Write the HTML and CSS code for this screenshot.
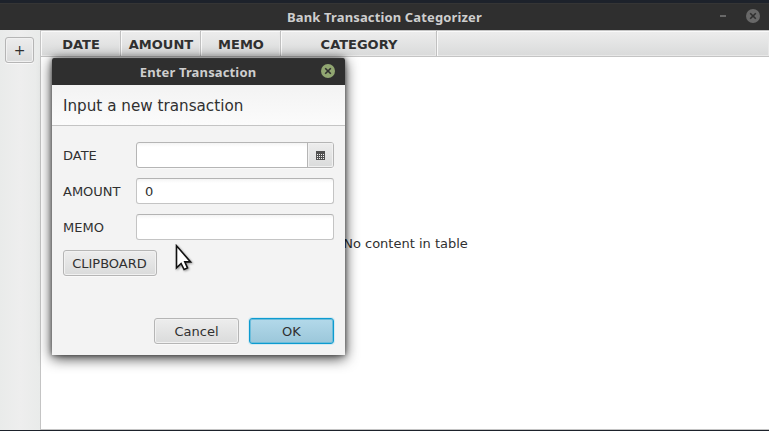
FILE: index.html
```html
<!DOCTYPE html>
<html lang="en">
<head>
<meta charset="utf-8">
<title>Bank Transaction Categorizer</title>
<link rel="stylesheet" href="styles.css">
</head>
<body>
<div class="window">
  <header class="titlebar">
    <span class="title">Bank Transaction Categorizer</span>
    <span class="minimize"></span>
    <svg class="close" width="14" height="14" viewBox="0 0 14 14"><circle cx="7" cy="7" r="7"/><path d="M4.2 4.2l5.6 5.6M9.8 4.2l-5.6 5.6"/></svg>
  </header>
  <div class="content">
    <aside class="toolbar"><button class="btn add">+</button></aside>
    <main class="table">
      <div class="columns">
        <div class="col">DATE</div>
        <div class="col">AMOUNT</div>
        <div class="col">MEMO</div>
        <div class="col wide">CATEGORY</div>
        <div class="filler"></div>
      </div>
      <div class="placeholder">No content in table</div>
    </main>
  </div>
</div>
<section class="dialog">
  <header class="titlebar dialog-bar">
    <span class="title">Enter Transaction</span>
    <svg class="close" width="14" height="14" viewBox="0 0 14 14"><circle cx="7" cy="7" r="7"/><path d="M4.2 4.2l5.6 5.6M9.8 4.2l-5.6 5.6"/></svg>
  </header>
  <div class="banner">Input a new transaction</div>
  <div class="form">
    <span>DATE</span>
    <div class="field date">
      <div class="date-value"></div>
      <div class="picker">
        <svg width="9" height="9" viewBox="0 0 9 9" shape-rendering="crispEdges"><path class="page" d="M0 0h9v9H0z"/><path class="days" d="M1 3.5h7M1 5.5h7M1 7.5h7"/></svg>
      </div>
    </div>
    <span>AMOUNT</span>
    <div class="field">0</div>
    <span>MEMO</span>
    <div class="field"></div>
    <button class="btn clipboard">CLIPBOARD</button>
  </div>
  <div class="actions">
    <button class="btn">Cancel</button>
    <button class="btn primary">OK</button>
  </div>
</section>
<svg class="cursor" width="20" height="30" viewBox="0 0 20 30"><path d="M1.5 1.8v22l4.6-4.3 3 6 3.4-1.6-2.7-6h5.8z"/></svg>
</body>
</html>
```
FILE: styles.css
```css
* { box-sizing: border-box; }
body {
  margin: 0;
  width: 769px;
  height: 431px;
  overflow: hidden;
  background: #1d222b;
  color: #303030;
  font: 13px "DejaVu Sans", sans-serif;
}
.window {
  height: 430px;
  padding-top: 3px;
  display: flex;
  flex-direction: column;
}
.titlebar {
  height: 27px;
  flex: none;
  display: flex;
  align-items: center;
  padding: 0 9px 0 0;
  background: #2f2f2f;
  border-top: 1px solid #353535;
  color: #cecece;
  font: bold 13px "Noto Sans", sans-serif;
  letter-spacing: .14px;
}
.titlebar .title {
  flex: 1;
  text-align: center;
  padding-left: 49px;
}
.minimize {
  width: 6px;
  height: 2px;
  margin: 0 20px 2px 0;
  background: #686868;
}
.close { margin-bottom: 2px; fill: #686868; }
.close path { stroke: #2f2f2f; stroke-width: 1.6; }
.content { flex: 1; display: flex; min-height: 0; }
.toolbar {
  width: 40px;
  padding: 7px 0 0 5px;
  background: linear-gradient(90deg, #e9ebea, #eeeeee 50%, #e9ebea);
}
.btn {
  height: 26px;
  padding: 0;
  border: 1px solid #b5b5b5;
  border-radius: 3px;
  background: linear-gradient(#ededed, #dadbdb);
  box-shadow: inset 0 0 0 1px #f1f1f1, 0 1px 0 #f9f9f9;
  color: #303030;
  font: inherit;
}
.add { display: block; width: 29px; font-size: 14px; }
.table {
  flex: 1;
  display: flex;
  flex-direction: column;
  border: 1px solid #c4c4c4;
  border-right: 0;
  background: #fff;
}
.columns {
  height: 26px;
  flex: none;
  display: flex;
  border-bottom: 1px solid #c4c4c4;
  font-weight: bold;
}
.col, .filler {
  background: linear-gradient(#ededed, #d9dada);
  box-shadow: inset 1px 1px 0 #fafafa, inset -1px -1px 0 #e8e8e8;
}
.col {
  width: 80px;
  display: flex;
  align-items: center;
  justify-content: center;
  padding: 2px 0 0 1px;
  border-right: 1px solid #c0c0c0;
}
.wide { width: 156px; }
.filler { flex: 1; }
.placeholder {
  flex: 1;
  display: flex;
  align-items: center;
  justify-content: center;
  padding-left: 1px;
}
.dialog {
  position: absolute;
  left: 52px;
  top: 58px;
  width: 293px;
  height: 297px;
  display: flex;
  flex-direction: column;
  background: #f3f3f3;
  border-radius: 2px 2px 0 0;
  box-shadow: 0 3px 14px rgba(0, 0, 0, .8), 0 0 5px rgba(0, 0, 0, .5);
}
.dialog-bar {
  padding-right: 10px;
  border-radius: 2px 2px 0 0;
}
.dialog-bar .title { padding-left: 23px; }
.dialog-bar .close { fill: #91a671; }
.banner {
  height: 41px;
  flex: none;
  display: flex;
  align-items: center;
  padding: 2px 0 0 11px;
  border-bottom: 1px solid #c4c4c4;
  background: linear-gradient(#f3f3f3, #fbfbfb);
  font-size: 15.2px;
}
.form {
  flex: 1;
  display: grid;
  grid-template-columns: 63px 198px;
  grid-auto-rows: 26px;
  gap: 10px;
  align-content: start;
  align-items: center;
  padding: 16px 11px 0;
}
.field {
  height: 26px;
  display: flex;
  align-items: center;
  padding-left: 8px;
  border: 1px solid #c4c4c4;
  border-top-color: #b3b3b3;
  border-radius: 3px;
  background: linear-gradient(#f4f4f4, #fff 4px);
}
.date {
  padding: 0;
  align-items: stretch;
  border-color: #b5b5b5;
  box-shadow: 0 1px 0 #f9f9f9;
}
.date-value { flex: 1; }
.picker {
  width: 26px;
  display: flex;
  align-items: center;
  justify-content: center;
  padding-right: 1px;
  border-left: 1px solid #b5b5b5;
  border-radius: 0 2px 2px 0;
  background: linear-gradient(#ededed, #dadbdb);
  box-shadow: inset 0 0 0 1px #f1f1f1;
}
.page { fill: #505050; }
.days { stroke: #eee; stroke-width: 1; stroke-dasharray: 1 1; }
.form .clipboard { grid-column: 1 / 3; width: 94px; padding-right: 1px; }
.actions {
  display: flex;
  justify-content: flex-end;
  gap: 10px;
  padding: 0 11px 11px;
}
.actions .btn { width: 85px; }
.actions .primary {
  border-color: #0d9bd0;
  background: linear-gradient(#b3d9ea, #9bc7da);
  box-shadow: inset 0 0 0 1px #6dbddb, 0 0 0 1px #d4e9f1;
}
.cursor {
  position: absolute;
  left: 175px;
  top: 244px;
  filter: drop-shadow(1px 1px 1px rgba(0, 0, 0, .4));
}
.cursor path { fill: #fff; stroke: #111; stroke-width: 1.6; }
```
